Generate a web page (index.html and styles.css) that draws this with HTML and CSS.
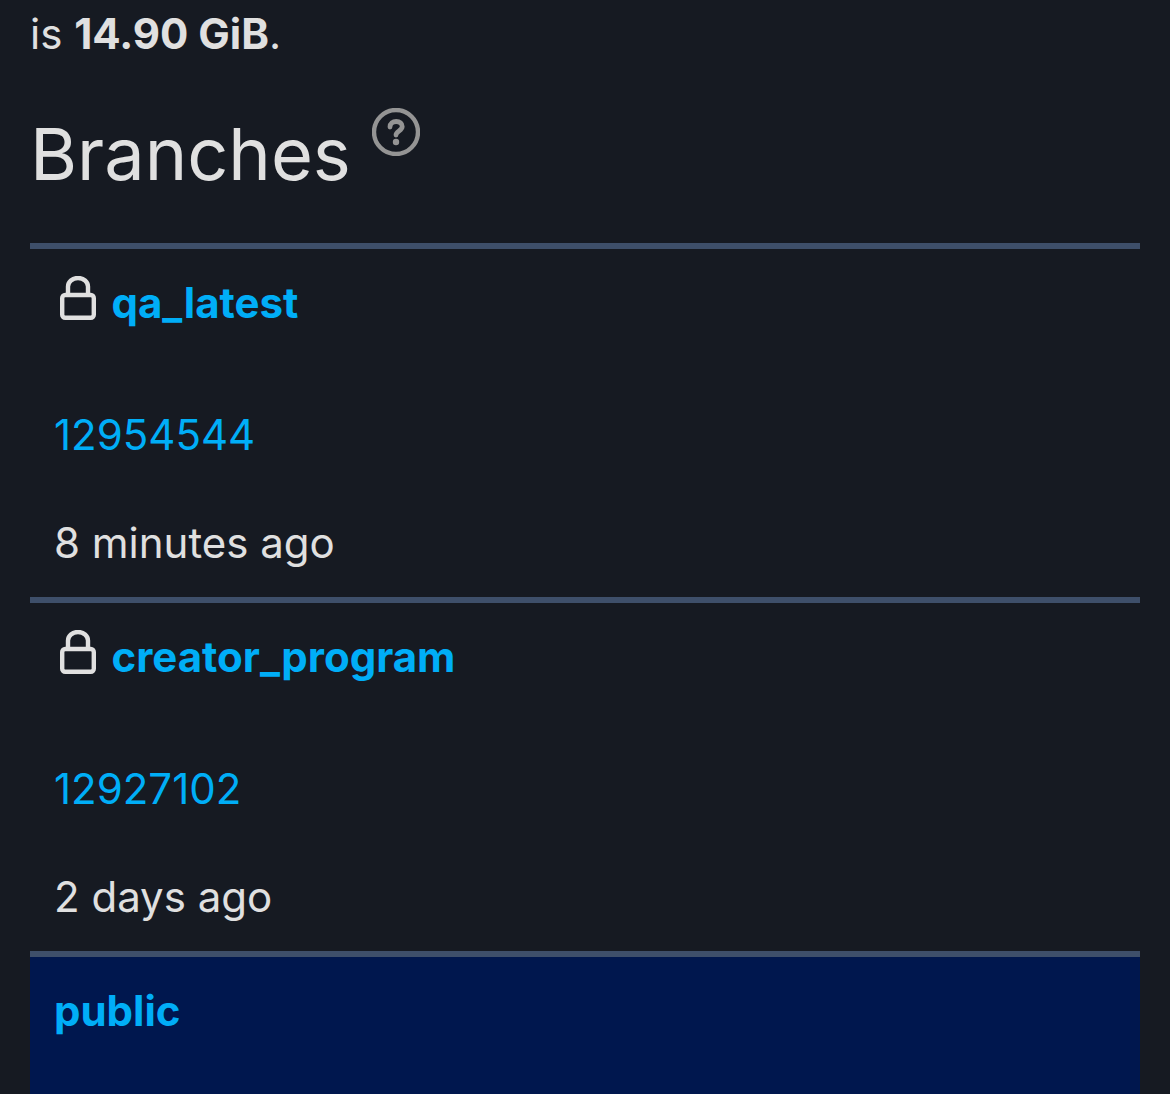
FILE: index.html
```html
<!DOCTYPE html>
<html lang="en">
<head>
<meta charset="utf-8">
<title>Branches</title>
<link rel="stylesheet" href="styles.css">
</head>
<body>
<main class="page">
<p class="usage">is <strong>14.90 GiB</strong>.</p>
<h2 class="heading"><span>Branches</span>
<svg class="help" viewBox="0 0 48 48" width="48" height="48"><circle cx="24" cy="24" r="22" fill="none" stroke="#949494" stroke-width="4.400"/><path d="M18 19c0-3.500 2.800-5.500 6.200-5.500 3.600 0 6 2.100 6 5 0 4.300-6.200 4.500-6.200 8.500" fill="none" stroke="#949494" stroke-width="4.800" stroke-linecap="round"/><circle cx="24" cy="34" r="3.200" fill="#949494"/></svg></h2>
<section class="row">
<div class="name name-locked"><svg class="lock" viewBox="0 0 36 44" width="36" height="44"><rect x="2.200" y="19" width="31.600" height="22.800" rx="3" fill="none" stroke="#e0e0e0" stroke-width="4.400"/><path d="M8 19V10.500a10 8.500 0 0 1 20 0V19" fill="none" stroke="#e0e0e0" stroke-width="4.400"/></svg><a href="#">qa_latest</a></div>
<div class="commit"><a href="#">12954544</a></div>
<div class="time">8 minutes ago</div>
</section>
<section class="row">
<div class="name name-locked"><svg class="lock" viewBox="0 0 36 44" width="36" height="44"><rect x="2.200" y="19" width="31.600" height="22.800" rx="3" fill="none" stroke="#e0e0e0" stroke-width="4.400"/><path d="M8 19V10.500a10 8.500 0 0 1 20 0V19" fill="none" stroke="#e0e0e0" stroke-width="4.400"/></svg><a href="#">creator_program</a></div>
<div class="commit"><a href="#">12927102</a></div>
<div class="time">2 days ago</div>
</section>
<section class="row row-active">
<div class="name"><a href="#">public</a></div>
</section>
</main>
</body>
</html>
```
FILE: styles.css
```css
html, body { margin: 0; padding: 0; background: #161a22; height: 1094px; overflow: hidden; }
body { font-family: Inter, "Liberation Sans", sans-serif; color: #e0e0e0; }
.page { padding: 0 30px; }
a { color: #00aef7; text-decoration: none; }
.usage { margin: 0; font-size: 42px; line-height: 68px; height: 66px; }
.usage strong { font-weight: 700; }
.heading { margin: 0; height: 177px; font-size: 72px; font-weight: 400; line-height: 86px; padding-top: 45px; box-sizing: border-box; display: flex; align-items: flex-start; gap: 21px; }
.heading span { display: block; }
.help { margin-top: -3px; }
.row { border-top: 6px solid #3e4f6a; height: 348px; padding-left: 24px; }
.name { font-size: 42px; font-weight: 700; line-height: 50px; padding-top: 29px; height: 50px; }
.name-locked { display: flex; align-items: center; gap: 15.500px; padding-left: 6px; }
.lock { margin-top: -11px; }
.commit { font-size: 42px; line-height: 50px; margin-top: 82px; }
.time { font-size: 42px; line-height: 50px; margin-top: 58px; }
.row-active { background: #00174e; height: 137px; }
```
